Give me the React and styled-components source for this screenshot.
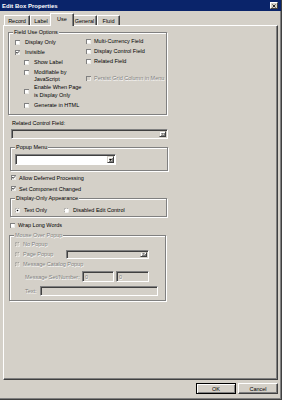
import React from "react";
import styled, { createGlobalStyle } from "styled-components";

const GlobalStyle = createGlobalStyle`
  body {
    margin: 0;
    background: #d4d0c8;
    font-family: "Liberation Sans", Arial, sans-serif;
    font-size: 5.5px;
    color: #000;
  }
`;

const Window = styled.div`
  width: 282px;
  height: 400px;
  box-sizing: border-box;
  display: flex;
  flex-direction: column;
  background: #d4d0c8;
  border-right: 1px solid #404040;
  border-bottom: 1px solid #404040;
  box-shadow: inset -1px -1px 0 #808080;
`;

const TitleBar = styled.div`
  height: 11px;
  flex: none;
  background: #0a246a;
  color: #fff;
  font-weight: bold;
  font-size: 6px;
  display: flex;
  align-items: center;
  justify-content: space-between;
  padding: 0 3px 0 2px;
`;

const CloseButton = styled.span`
  width: 8px;
  height: 7px;
  box-sizing: border-box;
  background: #d4d0c8;
  border: 1px solid;
  border-color: #fff #404040 #404040 #fff;
  display: flex;
  align-items: center;
  justify-content: center;
`;

const Body = styled.div`
  flex: 1;
  display: flex;
  flex-direction: column;
  padding: 2px 3px 0 3px;
`;

const TabStrip = styled.div`
  display: flex;
  align-items: flex-end;
  height: 12px;
  padding-left: 1px;
`;

const Tab = styled.div`
  position: relative;
  z-index: ${p => (p.$active ? 2 : 1)};
  box-sizing: border-box;
  width: ${p => p.$w + (p.$active ? 4 : 0)}px;
  height: ${p => (p.$active ? 13 : 10)}px;
  margin: 0 ${p => (p.$active ? -2 : 0)}px ${p => (p.$active ? -1 : 0)}px;
  padding-bottom: ${p => (p.$active ? 2 : 0)}px;
  background: #d4d0c8;
  border-top: 1px solid #fff;
  border-left: 1px solid #fff;
  border-right: 1px solid #404040;
  box-shadow: inset -1px 0 0 #808080;
  border-radius: 1px 1px 0 0;
  display: flex;
  align-items: center;
  justify-content: center;
  line-height: 6px;
`;

const Panel = styled.div`
  height: 355px;
  flex: none;
  box-sizing: border-box;
  border: 1px solid;
  border-color: #fff #404040 #404040 #fff;
  box-shadow: inset -1px -1px 0 #808080;
  display: flex;
  flex-direction: column;
  align-items: flex-start;
`;

const GroupBox = styled.div`
  position: relative;
  box-sizing: border-box;
  width: ${p => p.$w}px;
  height: ${p => p.$h}px;
  margin: ${p => p.$mt}px 0 0 ${p => p.$ml}px;
  border: 1px solid #808080;
  box-shadow: 1px 1px 0 #fff, inset 1px 1px 0 #fff;
  display: flex;
  flex-direction: ${p => (p.$row ? "row" : "column")};
  align-items: flex-start;
  padding-top: ${p => p.$pt || 0}px;
`;

const GroupTitle = styled.span`
  position: absolute;
  top: -4px;
  left: 4px;
  padding: 0 1px;
  background: #d4d0c8;
  line-height: 7px;
  white-space: nowrap;
  color: ${p => (p.$disabled ? "#808080" : "#000")};
  text-shadow: ${p => (p.$disabled ? "0.5px 0.5px 0 #fff" : "none")};
`;

const Column = styled.div`
  display: flex;
  flex-direction: column;
  width: ${p => (p.$w ? `${p.$w}px` : "auto")};
  padding: ${p => p.$pt}px 0 0 ${p => p.$pl}px;
`;

const OptionRow = styled.div`
  display: flex;
  align-items: ${p => (p.$alignTop ? "flex-start" : "center")};
  gap: ${p => p.$gap ?? 5}px;
  height: ${p => (p.$h ? `${p.$h}px` : "auto")};
  margin: ${p => p.$mt || 0}px 0 0 ${p => p.$ml || 0}px;
  color: ${p => (p.$disabled ? "#808080" : "#000")};
  text-shadow: ${p => (p.$disabled ? "0.5px 0.5px 0 #fff" : "none")};
  white-space: nowrap;
`;

const OptionText = styled.span`
  line-height: ${p => p.$lh || 8}px;
  width: ${p => (p.$w ? `${p.$w}px` : "auto")};
`;

const PlainLabel = styled.div`
  line-height: 8px;
  margin: ${p => p.$mt}px 0 0 ${p => p.$ml}px;
`;

const CheckBox = styled.span`
  flex: none;
  width: 5px;
  height: 5px;
  margin-top: ${p => p.$mt || 0}px;
  background: ${p => (p.$disabled ? "#d4d0c8" : "#fff")};
  box-shadow: inset 1px 1px 0 #808080, inset -1px -1px 0 #ecebe7;
  display: flex;
`;

const Field = styled.div`
  flex: none;
  box-sizing: border-box;
  width: ${p => p.$w}px;
  height: ${p => p.$h}px;
  margin: ${p => p.$mt || 0}px 0 0 ${p => p.$ml || 0}px;
  background: ${p => (p.$disabled ? "#d4d0c8" : "#fff")};
  border: 1px solid;
  border-color: #808080 #fff #fff #808080;
  box-shadow: inset 1px 1px 0 #404040;
  display: flex;
  align-items: center;
  justify-content: ${p => (p.$text ? "flex-start" : "flex-end")};
  padding: 1px 1px 1px ${p => (p.$text ? 2 : 1)}px;
  color: #808080;
  line-height: 6px;
`;

const DropButton = styled.span`
  width: 7px;
  height: 100%;
  box-sizing: border-box;
  background: #d4d0c8;
  border: 1px solid;
  border-color: #d4d0c8 #404040 #404040 #d4d0c8;
  box-shadow: inset 1px 1px 0 #fff, inset -1px -1px 0 #808080;
  display: flex;
  align-items: center;
  justify-content: center;
`;

const Footer = styled.div`
  display: flex;
  justify-content: flex-end;
  gap: 2px;
  margin-top: 3px;
`;

const Button = styled.div`
  width: 40px;
  height: 11px;
  box-sizing: border-box;
  border: 1px solid;
  border-color: ${p => (p.$default ? "#000" : "#fff #404040 #404040 #fff")};
  box-shadow: ${p =>
    p.$default
      ? "inset 1px 1px 0 #fff, inset -1px -1px 0 #808080"
      : "inset -1px -1px 0 #808080"};
  display: flex;
  align-items: center;
  justify-content: center;
  line-height: 6px;
`;

const Check = ({ checked, disabled, mt }) => (
  <CheckBox $disabled={disabled} $mt={mt}>
    {checked && (
      <svg width="5" height="5" viewBox="0 0 10 10">
        <path d="M2.5 4.5 L4.3 6.6 L8 2.8" stroke="#000" strokeWidth="1.8" fill="none" />
      </svg>
    )}
  </CheckBox>
);

const Radio = ({ checked, disabled }) => (
  <svg width="5" height="5" viewBox="0 0 12 12" style={{ flex: "none" }}>
    <circle cx="6" cy="6" r="5.3" fill={disabled ? "#d4d0c8" : "#fff"} />
    <path d="M1.5 9.5 A5.3 5.3 0 0 1 9.5 1.5" stroke="#808080" strokeWidth="1.6" fill="none" />
    <path d="M10.5 2.5 A5.3 5.3 0 0 1 2.5 10.5" stroke="#fff" strokeWidth="1.6" fill="none" />
    {checked && <circle cx="6" cy="6" r="2" fill={disabled ? "#808080" : "#000"} />}
  </svg>
);

const Dropdown = ({ disabled, ...rest }) => (
  <Field $disabled={disabled} {...rest}>
    <DropButton>
      <svg width="3" height="2" viewBox="0 0 6 4">
        <path d="M0 0 H6 L3 4 Z" fill={disabled ? "#808080" : "#000"} />
      </svg>
    </DropButton>
  </Field>
);

const tabs = [
  { label: "Record", w: 26 },
  { label: "Label", w: 22 },
  { label: "Use", w: 20, active: true },
  { label: "General", w: 25 },
  { label: "Fluid", w: 23 }
];

export default function App() {
  return (
    <>
      <GlobalStyle />
      <Window>
        <TitleBar>
          <span>Edit Box Properties</span>
          <CloseButton>
            <svg width="4" height="4" viewBox="0 0 8 8">
              <path d="M1 1 L7 7 M7 1 L1 7" stroke="#000" strokeWidth="1.6" />
            </svg>
          </CloseButton>
        </TitleBar>
        <Body>
          <TabStrip>
            {tabs.map(t => (
              <Tab key={t.label} $w={t.w} $active={t.active}>
                {t.label}
              </Tab>
            ))}
          </TabStrip>
          <Panel>
            <GroupBox $w={159} $h={83} $mt={6} $ml={4} $row>
              <GroupTitle>Field Use Options</GroupTitle>
              <Column $w={71} $pt={4} $pl={6}>
                <OptionRow $h={10}>
                  <Check />
                  <OptionText>Display Only</OptionText>
                </OptionRow>
                <OptionRow $h={10}>
                  <Check checked />
                  <OptionText>Invisible</OptionText>
                </OptionRow>
                <OptionRow $h={10} $ml={9}>
                  <Check />
                  <OptionText>Show Label</OptionText>
                </OptionRow>
                <OptionRow $mt={2} $ml={9} $alignTop>
                  <Check mt={1} />
                  <OptionText $lh={7}>
                    Modifiable by
                    <br />
                    JavaScript
                  </OptionText>
                </OptionRow>
                <OptionRow $mt={1} $ml={9}>
                  <Check />
                  <OptionText $lh={7.5}>
                    Enable When Page
                    <br />
                    is Display Only
                  </OptionText>
                </OptionRow>
                <OptionRow $h={10} $mt={1} $ml={9}>
                  <Check />
                  <OptionText>Generate in HTML</OptionText>
                </OptionRow>
              </Column>
              <Column $pt={3} $pl={0}>
                <OptionRow $h={10} $gap={3}>
                  <Check />
                  <OptionText>Multi-Currency Field</OptionText>
                </OptionRow>
                <OptionRow $h={10} $gap={3}>
                  <Check />
                  <OptionText>Display Control Field</OptionText>
                </OptionRow>
                <OptionRow $h={10} $gap={3}>
                  <Check />
                  <OptionText>Related Field</OptionText>
                </OptionRow>
                <OptionRow $h={10} $mt={7} $gap={3} $disabled>
                  <Check disabled />
                  <OptionText>Persist Grid Column in Menu</OptionText>
                </OptionRow>
              </Column>
            </GroupBox>

            <PlainLabel $mt={4} $ml={8}>Related Control Field:</PlainLabel>
            <Dropdown disabled $w={157} $h={10} $mt={2} $ml={7} />

            <GroupBox $w={158} $h={24} $mt={8} $ml={6} $pt={6}>
              <GroupTitle>Popup Menu</GroupTitle>
              <Dropdown $w={101} $h={11} $ml={4} />
            </GroupBox>

            <OptionRow $h={11} $mt={1} $ml={7} $gap={3}>
              <Check checked />
              <OptionText>Allow Deferred Processing</OptionText>
            </OptionRow>
            <OptionRow $h={11} $ml={7} $gap={3}>
              <Check checked />
              <OptionText>Set Component Changed</OptionText>
            </OptionRow>

            <GroupBox $w={157} $h={19} $mt={4} $ml={6} $pt={6} $row>
              <GroupTitle>Display-Only Appearance</GroupTitle>
              <OptionRow $h={10} $ml={4} $gap={4}>
                <Radio checked />
                <OptionText $w={40}>Text Only</OptionText>
              </OptionRow>
              <OptionRow $h={10} $gap={4}>
                <Radio />
                <OptionText>Disabled Edit Control</OptionText>
              </OptionRow>
            </GroupBox>

            <OptionRow $h={10} $mt={3} $ml={6} $gap={3}>
              <Check />
              <OptionText>Wrap Long Words</OptionText>
            </OptionRow>

            <GroupBox $w={157} $h={66} $mt={5} $ml={5} $pt={3}>
              <GroupTitle $disabled>Mouse Over Popup</GroupTitle>
              <OptionRow $h={10} $ml={5} $gap={3} $disabled>
                <Radio disabled />
                <OptionText>No Popup</OptionText>
              </OptionRow>
              <OptionRow $h={10} $ml={5} $gap={3} $disabled>
                <Radio disabled />
                <OptionText $w={40}>Page Popup</OptionText>
                <Dropdown disabled $w={83} $h={9} />
              </OptionRow>
              <OptionRow $h={10} $ml={5} $gap={3} $disabled>
                <Radio disabled />
                <OptionText>Message Catalog Popup</OptionText>
              </OptionRow>
              <OptionRow $h={11} $mt={2} $ml={15} $gap={0} $disabled>
                <OptionText $w={57}>Message Set/Number:</OptionText>
                <Field $disabled $text $w={32} $h={11}>0</Field>
                <Field $disabled $text $w={33} $h={11} $ml={2}>0</Field>
              </OptionRow>
              <OptionRow $h={10} $mt={4} $ml={15} $gap={0} $disabled>
                <OptionText $w={15}>Text:</OptionText>
                <Field $disabled $text $w={118} $h={10} />
              </OptionRow>
            </GroupBox>
          </Panel>
          <Footer>
            <Button $default>OK</Button>
            <Button>Cancel</Button>
          </Footer>
        </Body>
      </Window>
    </>
  );
}
